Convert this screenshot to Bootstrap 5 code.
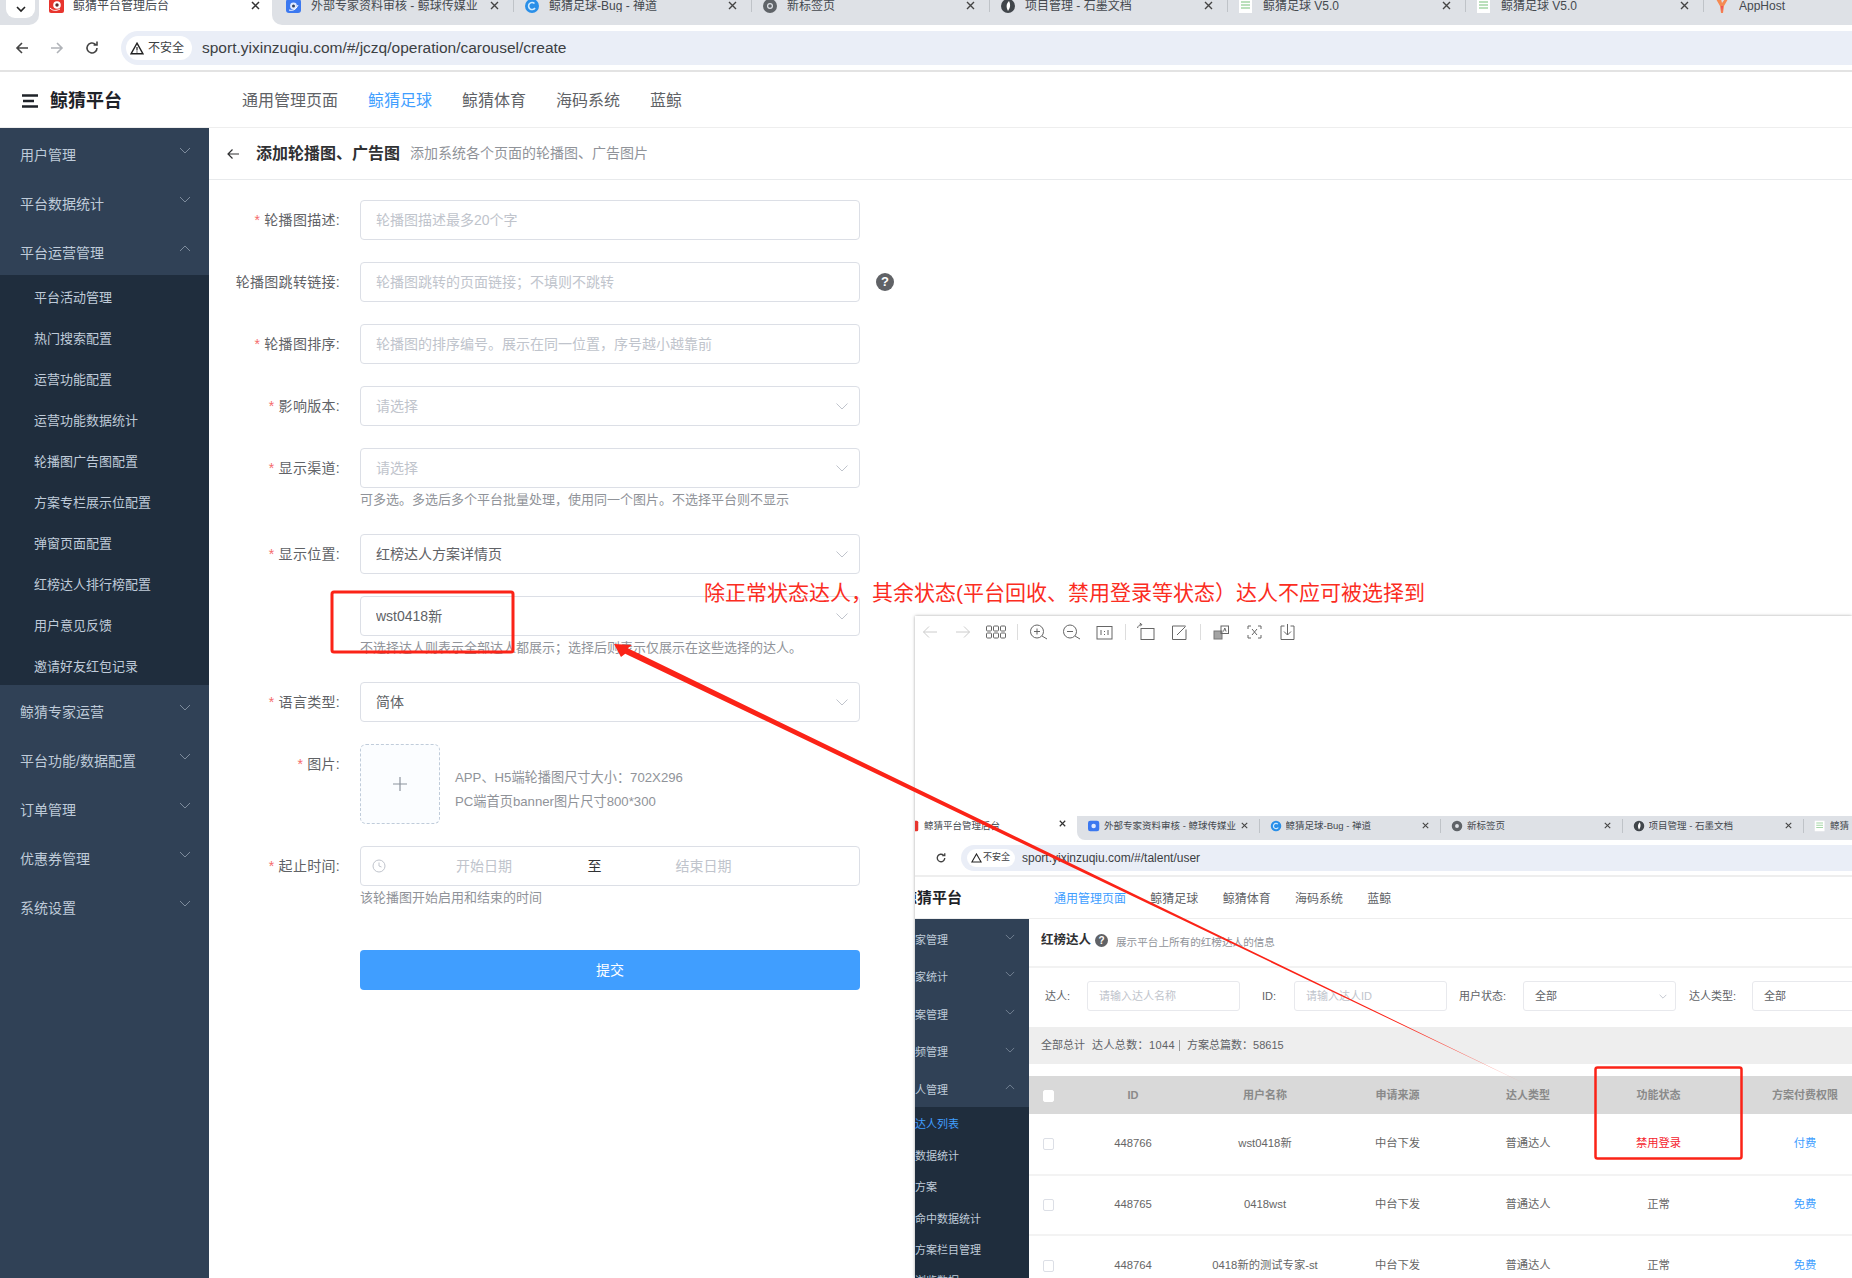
<!DOCTYPE html>
<html lang="zh-CN">
<head>
<meta charset="UTF-8">
<meta name="viewport" content="width=device-width, initial-scale=1.0">
<title>鲸猜平台管理后台</title>
<link href="https://cdn.jsdelivr.net/npm/bootstrap@5.3.2/dist/css/bootstrap.min.css" rel="stylesheet">
<style>
  /* page frame */
  html, body { height: 100%; }
  body { position: relative; width: 1852px; height: 1278px; overflow: hidden; background: #fff;
    font-family: "Liberation Sans", "Noto Sans CJK SC", sans-serif; font-size: 14px; color: #606266; }

  /* browser chrome, big and small version */
  .tab-strip { display: flex; height: 25px; background: #fff; }
  .strip-left { width: 39px; background: #dee1e6; border-bottom-right-radius: 10px; padding-left: 6px; flex: none; }
  .strip-pill { width: 29px; height: 18px; background: #fff; border-radius: 0 0 9px 9px; display: flex; align-items: center; justify-content: center; }
  .tab-live { width: 233px; flex: none; display: flex; align-items: flex-start; background: #fff; padding-left: 10px; }
  .strip-rest { flex: 1; display: flex; align-items: flex-start; background: #dee1e6; border-bottom-left-radius: 10px; min-width: 0; overflow: hidden; padding-left: 3px; }
  .tab-item { width: 238px; flex: none; display: flex; align-items: flex-start; padding-left: 10px; border-left: 1px solid #bfc3c8; height: 12px; position: relative; }
  .tab-item.first { border-left-color: transparent; }
  .tab-icon { width: 16px; height: 14px; flex: none; margin-top: -1px; }
  .tab-text { font-size: 12px; line-height: 12px; color: #45494f; margin-left: 9px; width: 172px; white-space: nowrap; overflow: hidden; }
  .tab-x { position: absolute; right: 14px; top: 1px; width: 9px; height: 9px; }
  .tab-live .tab-text { width: auto; margin-left: 8px; }
  .tab-live .tab-x { position: static; margin-left: auto; margin-right: 12px; margin-top: 1px; }

  .addr-row { height: 47px; display: flex; align-items: flex-start; padding-top: 6px; border-bottom: 2px solid #e3e3e3; background: #fff; }
  .addr-btns { width: 121px; flex: none; display: flex; align-items: center; height: 34px; padding-left: 14px; gap: 19px; }
  .addr-pill { flex: 1; height: 34px; background: #eaeef7; border-radius: 17px 0 0 17px; display: flex; align-items: center; padding-left: 5px; }
  .addr-chip { width: 66px; height: 24px; background: #fff; border-radius: 12px; display: flex; align-items: center; padding-left: 4px; gap: 4px; font-size: 12px; color: #3c4043; flex: none; }
  .addr-url { margin-left: 10px; font-size: 15.5px; color: #3c4043; white-space: nowrap; }

  /* app top bar */
  .top-bar { height: 56px; border-bottom: 1px solid #eee; display: flex; align-items: center; padding: 2px 0 0 22px; background: #fff; }
  .brand-name { font-size: 18px; font-weight: 700; color: #1f2329; margin-left: 12px; width: 192px; line-height: 1; }
  .top-bar .nav-link { padding: 0; font-size: 16px; color: #606266; margin-right: 30px; }
  .top-bar .nav-link.active { color: #409eff; }

  /* app body */
  .app-body { display: flex; height: 1150px; }
  .side-menu { width: 209px; flex: none; background: #304156; }
  .side-item { height: 49px; display: flex; align-items: center; justify-content: space-between; padding: 5px 18px 0 20px; color: #bfcbd9; font-size: 14px; }
  .side-item svg { margin-top: -10px; }
  .side-sub { background: #1f2d3d; }
  .side-sub div { height: 41px; display: flex; align-items: center; padding: 4px 0 0 34px; color: #bfcbd9; font-size: 13px; }
  .main-pane { flex: 1; min-width: 0; background: #fff; }
  .page-head { height: 52px; border-bottom: 1px solid #e8eaec; display: flex; align-items: center; padding-left: 17px; }
  .page-title { font-size: 16px; font-weight: 700; color: #303133; margin-left: 16px; }
  .page-sub { font-size: 14px; color: #909399; margin-left: 10px; }

  /* form */
  .form-area { padding-top: 20px; width: 760px; }
  .form-line { display: flex; margin-bottom: 22px; }
  .form-line.extra { margin-bottom: 40px; }
  .line-label { width: 151px; flex: none; text-align: right; padding-right: 20px; line-height: 40px; color: #606266; letter-spacing: .3px; }
  .line-label i { color: #f56c6c; font-style: normal; margin-right: 4px; }
  .line-body { width: 500px; flex: none; }
  .form-control.el-input, .form-select.el-input { height: 40px; border: 1px solid #dcdfe6; border-radius: 4px; font-size: 14px; color: #606266; padding: 0 15px; box-shadow: none; }
  .form-control.el-input::placeholder { color: #c0c4cc; }
  .form-select.el-input { background-image: url("data:image/svg+xml,%3Csvg xmlns='http://www.w3.org/2000/svg' viewBox='0 0 12 7'%3E%3Cpath d='M.5.5 6 6l5.5-5.5' fill='none' stroke='%23c0c4cc'/%3E%3C/svg%3E"); background-size: 12px 7px; background-position: right 11px center; }
  .form-select.el-input.empty { color: #c0c4cc; }
  .line-help { height: 24px; line-height: 24px; font-size: 13px; color: #909399; white-space: nowrap; }
  .help-dot { width: 18px; height: 18px; border-radius: 50%; background: #606266; color: #fff; font-size: 13px; font-weight: 700; line-height: 18px; text-align: center; margin: 11px 0 0 16px; flex: none; }
  .upload-box { width: 80px; height: 80px; flex: none; border: 1px dashed #c0ccda; border-radius: 6px; background: #fbfdff; display: flex; align-items: center; justify-content: center; }
  .upload-tip { margin-left: 15px; padding-top: 22px; color: #909399; font-size: 13.2px; line-height: 24px; white-space: nowrap; }
  .date-box { display: flex; align-items: center; padding: 0 0 0 11px !important; }
  .date-box .ph { color: #c0c4cc; }
  .date-box .ph.start { margin-left: 12px; text-align: left; padding-left: 58px; width: 188.5px; }
  .date-box .mid { color: #303133; width: 18px; text-align: center; margin-left: -1px; }
  .date-box .ph.end { width: 210px; text-align: left; padding-left: 72px; }
  .submit-btn { width: 500px; height: 40px; background: #409eff; border: 0; border-radius: 4px; color: #fff; font-size: 14px; }

  /* pasted screenshot window */
  .shot-win { position: absolute; left: 915px; top: 616px; width: 937px; height: 662px; background: #fff; box-shadow: 0 0 3px rgba(0,0,0,.35); overflow: hidden; }
  .shot-tools { height: 200px; display: flex; align-items: flex-start; padding: 6px 0 0 5px; }
  .shot-tools svg { width: 20px; height: 20px; margin-right: 13px; flex: none; }
  .shot-tools svg g { fill: none; stroke: #666; stroke-width: 1; }
  .shot-tools svg g.off { stroke: #ccc; }
  .tool-sep { width: 1px; height: 16px; background: #ddd; margin: 2px 10px 0 -2px; flex: none; }

  .mini-strip { display: flex; height: 24px; background: #fff; }
  .mini-live { width: 162px; flex: none; display: flex; align-items: center; padding-bottom: 4px; overflow: hidden; position: relative; }
  .mini-rest { flex: 1; display: flex; background: #dee1e6; border-radius: 0 0 0 8px; align-items: center; padding-bottom: 4px; overflow: hidden; }
  .mini-tab { width: 181.5px; flex: none; display: flex; align-items: center; padding-left: 10px; border-left: 1px solid #bfc3c8; height: 14px; position: relative; }
  .mini-tab.first { border-left-color: transparent; }
  .mini-tab svg.tab-icon, .mini-live svg.tab-icon { width: 12px; height: 12px; margin: 0; }
  .mini-text { font-size: 9.5px; color: #45494f; margin-left: 4px; white-space: nowrap; overflow: hidden; width: 136px; }
  .mini-tab .tab-x, .mini-live .tab-x { width: 7px; height: 7px; top: 3px; right: 11px; }
  .mini-live .tab-x { top: 4px; }
  .mini-addr { height: 37px; padding-top: 5px; border-bottom: 2px solid #eee; display: flex; align-items: flex-start; }
  .mini-btns { width: 46px; flex: none; height: 26px; display: flex; align-items: center; justify-content: flex-end; padding-right: 14px; }
  .mini-pill { flex: 1; height: 26px; background: #eaeef7; border-radius: 13px 0 0 13px; display: flex; align-items: center; padding-left: 6px; }
  .mini-chip { width: 48px; height: 18px; background: #fff; border-radius: 9px; display: flex; align-items: center; padding-left: 4px; gap: 1px; font-size: 9px; color: #3c4043; flex: none; }
  .mini-url { margin-left: 7px; font-size: 12px; color: #3c4043; }
  .mini-top { height: 42px; border-bottom: 1px solid #eee; display: flex; align-items: center; padding-top: 2px; }
  .mini-brand { font-size: 15px; font-weight: 700; color: #1f2329; width: 152px; margin-left: -13px; white-space: nowrap; }
  .mini-top a { font-size: 12px; color: #606266; margin-right: 24.3px; text-decoration: none; }
  .mini-top a.on { color: #409eff; }
  .mini-body { display: flex; height: 360px; }
  .mini-side { width: 114px; flex: none; background: #304156; }
  .mini-item { height: 37.6px; display: flex; align-items: center; justify-content: space-between; padding: 4px 14px 0 0; color: #bfcbd9; font-size: 11px; }
  .mini-item svg { margin-top: -6px; }
  .mini-sub { background: #1f2d3d; height: 180px; }
  .mini-sub div { height: 31.4px; display: flex; align-items: center; padding-top: 4px; color: #bfcbd9; font-size: 11px; white-space: nowrap; }
  .mini-sub div.on { color: #409eff; }
  .mini-main { flex: 1; min-width: 0; overflow: hidden; }
  .mini-head { height: 49px; border-bottom: 2px solid #f2f2f2; display: flex; align-items: center; padding: 0 0 4px 12px; }
  .mini-title { font-size: 12.5px; font-weight: 700; color: #303133; }
  .mini-dot { width: 13px; height: 13px; border-radius: 50%; background: #606266; color: #fff; font-size: 10px; font-weight: 700; line-height: 13px; text-align: center; margin: 0 8px 0 4px; }
  .mini-desc { font-size: 10.6px; color: #909399; padding-top: 5px; }
  .mini-filter { display: flex; align-items: center; padding: 13px 0 0 16px; height: 43px; white-space: nowrap; font-size: 11px; color: #606266; }
  .flt-box { width: 153px; height: 30px; border: 1px solid #e8e9ed; border-radius: 3px; line-height: 28px; padding-left: 11px; flex: none; display: flex; justify-content: space-between; align-items: center; padding-right: 8px; }
  .flt-box.ph { color: #c0c4cc; }
  .flt-l1 { width: 42px; flex: none; }
  .flt-l2 { width: 32px; flex: none; margin-left: 22px; }
  .flt-l3 { width: 64px; flex: none; margin-left: 12px; }
  .flt-l4 { width: 63px; flex: none; margin-left: 13px; }
  .mini-total { height: 37px; margin-top: 16px; background: #eee; display: flex; align-items: center; padding-left: 12px; font-size: 11px; color: #606266; white-space: nowrap; }
  .mini-total span { margin-right: 7px; }
  .mini-total span.div-r { border-right: 1px solid #999; line-height: 11px; padding-right: 4px; letter-spacing: .4px; }
  .talent-table { table-layout: fixed; width: 857px; margin: 12px 0 0; border-collapse: collapse; }
  .talent-table th { height: 38px; background: #d9d9d9; color: #8a8a8a; font-size: 11px; font-weight: 700; text-align: center; vertical-align: middle; padding: 0; border: 0; }
  .talent-table td { height: 60.5px; font-size: 11.3px; color: #666; text-align: center; vertical-align: middle; padding: 0; border: 0; border-bottom: 2px solid #f3f3f3; }
  .tick-box { display: inline-block; width: 11px; height: 12px; border: 1px solid #dcdfe6; border-radius: 2px; background: #fff; vertical-align: middle; }
  th .tick-box { border-color: #fff; }
  .txt-red { color: #f5222d !important; }
  .txt-blue { color: #409eff !important; }

  /* red marks on top of the picture */
  .mark-layer { position: absolute; left: 0; top: 0; pointer-events: none; }
  .mark-note { position: absolute; left: 704px; top: 578px; font-size: 21px; line-height: 30px; color: #fb2d1f; white-space: nowrap; }
</style>
</head>
<body>

<!-- browser tabs -->
<div class="tab-strip">
  <div class="strip-left"><div class="strip-pill"><svg width="10" height="7" viewBox="0 0 10 7"><path d="M1 1l4 4 4-4" fill="none" stroke="#222" stroke-width="1.6"/></svg></div></div>
  <div class="tab-live">
    <svg class="tab-icon" viewBox="0 0 16 14"><rect width="15" height="14" rx="2" fill="#e8352e"/><circle cx="8" cy="6" r="3.8" fill="#fff"/><circle cx="8" cy="6" r="1.7" fill="#5a2a2a"/><path d="M1 9c3 3 6 3 10 1" fill="none" stroke="#fff"/></svg>
    <span class="tab-text">鲸猜平台管理后台</span>
    <svg class="tab-x" viewBox="0 0 9 9"><path d="M1 1l7 7M8 1l-7 7" stroke="#333" stroke-width="1.5"/></svg>
  </div>
  <div class="strip-rest">
    <div class="tab-item first">
      <svg class="tab-icon" viewBox="0 0 16 14"><rect width="15" height="14" rx="3" fill="#3b78f0"/><circle cx="7.5" cy="7" r="3.4" fill="#dfe9ff"/><circle cx="7.5" cy="7" r="1.5" fill="#33415c"/><path d="M3 11c3 1 7 0 9-5" fill="none" stroke="#fff"/></svg>
      <span class="tab-text">外部专家资料审核 - 鲸球传媒业</span>
      <svg class="tab-x" viewBox="0 0 9 9"><path d="M1 1l7 7M8 1l-7 7" stroke="#444" stroke-width="1.4"/></svg>
    </div>
    <div class="tab-item">
      <svg class="tab-icon" viewBox="0 0 16 14"><circle cx="8" cy="7" r="7" fill="#2a8fe8"/><path d="M10.5 4.5A3.5 3.5 0 1 0 11 9" fill="none" stroke="#cfeaff" stroke-width="1.6"/></svg>
      <span class="tab-text">鲸猜足球-Bug - 禅道</span>
      <svg class="tab-x" viewBox="0 0 9 9"><path d="M1 1l7 7M8 1l-7 7" stroke="#444" stroke-width="1.4"/></svg>
    </div>
    <div class="tab-item">
      <svg class="tab-icon" viewBox="0 0 16 14"><circle cx="8" cy="7" r="7" fill="#5f6368"/><circle cx="8" cy="7" r="3" fill="#dee1e6"/><circle cx="8" cy="7" r="1.8" fill="#5f6368"/></svg>
      <span class="tab-text">新标签页</span>
      <svg class="tab-x" viewBox="0 0 9 9"><path d="M1 1l7 7M8 1l-7 7" stroke="#444" stroke-width="1.4"/></svg>
    </div>
    <div class="tab-item">
      <svg class="tab-icon" viewBox="0 0 16 14"><circle cx="8" cy="7" r="7" fill="#41464b"/><path d="M9 2c-3 3-3 6-1 10 2-3 3-6 1-10z" fill="#fff"/></svg>
      <span class="tab-text">项目管理 - 石墨文档</span>
      <svg class="tab-x" viewBox="0 0 9 9"><path d="M1 1l7 7M8 1l-7 7" stroke="#444" stroke-width="1.4"/></svg>
    </div>
    <div class="tab-item">
      <svg class="tab-icon" viewBox="0 0 16 14"><rect x="1" width="13" height="14" fill="#fff"/><path d="M3 3h9M3 6h9M3 9h9" stroke="#a5d6a7" stroke-width="1.6"/></svg>
      <span class="tab-text">鲸猜足球 V5.0</span>
      <svg class="tab-x" viewBox="0 0 9 9"><path d="M1 1l7 7M8 1l-7 7" stroke="#444" stroke-width="1.4"/></svg>
    </div>
    <div class="tab-item">
      <svg class="tab-icon" viewBox="0 0 16 14"><rect x="1" width="13" height="14" fill="#fff"/><path d="M3 3h9M3 6h9M3 9h9" stroke="#a5d6a7" stroke-width="1.6"/></svg>
      <span class="tab-text">鲸猜足球 V5.0</span>
      <svg class="tab-x" viewBox="0 0 9 9"><path d="M1 1l7 7M8 1l-7 7" stroke="#444" stroke-width="1.4"/></svg>
    </div>
    <div class="tab-item">
      <svg class="tab-icon" viewBox="0 0 16 14"><path d="M2 0h5l1 4 3-4h3L10 7l-1 7H7L6 7z" fill="#f58a52"/><path d="M7 7h2l-1 7z" fill="#ef4b5b"/></svg>
      <span class="tab-text">AppHost</span>
    </div>
  </div>
</div>

<!-- address bar -->
<div class="addr-row">
  <div class="addr-btns">
    <svg width="16" height="16" viewBox="0 0 16 16"><path d="M14 8H3M8 3L3 8l5 5" fill="none" stroke="#444" stroke-width="1.6"/></svg>
    <svg width="16" height="16" viewBox="0 0 16 16"><path d="M2 8h11M8 3l5 5-5 5" fill="none" stroke="#b0b3b8" stroke-width="1.6"/></svg>
    <svg width="16" height="16" viewBox="0 0 16 16"><path d="M13 8a5 5 0 1 1-1.6-3.7M13 1.5v3.4H9.6" fill="none" stroke="#444" stroke-width="1.6"/></svg>
  </div>
  <div class="addr-pill">
    <div class="addr-chip">
      <svg width="14" height="13" viewBox="0 0 14 13"><path d="M7 1.2l6 10.6H1z" fill="none" stroke="#222" stroke-width="1.4"/><path d="M7 5v3.6M7 9.6v1" stroke="#222" stroke-width="1.2"/></svg>
      <span>不安全</span>
    </div>
    <span class="addr-url">sport.yixinzuqiu.com/#/jczq/operation/carousel/create</span>
  </div>
</div>

<!-- app header -->
<div class="top-bar">
  <svg width="16" height="14" viewBox="0 0 16 14"><path d="M0 1.5h16M1 7h11M0 12.5h16" stroke="#1f2329" stroke-width="2.4"/></svg>
  <span class="brand-name">鲸猜平台</span>
  <nav class="nav">
    <a class="nav-link" href="#">通用管理页面</a>
    <a class="nav-link active" href="#">鲸猜足球</a>
    <a class="nav-link" href="#">鲸猜体育</a>
    <a class="nav-link" href="#">海码系统</a>
    <a class="nav-link" href="#">蓝鲸</a>
  </nav>
</div>

<div class="app-body">
  <aside class="side-menu">
    <div class="side-item"><span>用户管理</span><svg width="12" height="7" viewBox="0 0 12 7"><path d="M1 1l5 5 5-5" fill="none" stroke="#7d8b9c"/></svg></div>
    <div class="side-item"><span>平台数据统计</span><svg width="12" height="7" viewBox="0 0 12 7"><path d="M1 1l5 5 5-5" fill="none" stroke="#7d8b9c"/></svg></div>
    <div class="side-item"><span>平台运营管理</span><svg width="12" height="7" viewBox="0 0 12 7"><path d="M1 6l5-5 5 5" fill="none" stroke="#7d8b9c"/></svg></div>
    <div class="side-sub">
      <div>平台活动管理</div>
      <div>热门搜索配置</div>
      <div>运营功能配置</div>
      <div>运营功能数据统计</div>
      <div>轮播图广告图配置</div>
      <div>方案专栏展示位配置</div>
      <div>弹窗页面配置</div>
      <div>红榜达人排行榜配置</div>
      <div>用户意见反馈</div>
      <div>邀请好友红包记录</div>
    </div>
    <div class="side-item"><span>鲸猜专家运营</span><svg width="12" height="7" viewBox="0 0 12 7"><path d="M1 1l5 5 5-5" fill="none" stroke="#7d8b9c"/></svg></div>
    <div class="side-item"><span>平台功能/数据配置</span><svg width="12" height="7" viewBox="0 0 12 7"><path d="M1 1l5 5 5-5" fill="none" stroke="#7d8b9c"/></svg></div>
    <div class="side-item"><span>订单管理</span><svg width="12" height="7" viewBox="0 0 12 7"><path d="M1 1l5 5 5-5" fill="none" stroke="#7d8b9c"/></svg></div>
    <div class="side-item"><span>优惠券管理</span><svg width="12" height="7" viewBox="0 0 12 7"><path d="M1 1l5 5 5-5" fill="none" stroke="#7d8b9c"/></svg></div>
    <div class="side-item"><span>系统设置</span><svg width="12" height="7" viewBox="0 0 12 7"><path d="M1 1l5 5 5-5" fill="none" stroke="#7d8b9c"/></svg></div>
  </aside>

  <main class="main-pane">
    <div class="page-head">
      <svg width="14" height="12" viewBox="0 0 14 12"><path d="M13 6H2M6.5 1.5L2 6l4.5 4.5" fill="none" stroke="#303133" stroke-width="1.2"/></svg>
      <span class="page-title">添加轮播图、广告图</span>
      <span class="page-sub">添加系统各个页面的轮播图、广告图片</span>
    </div>

    <form class="form-area">
      <div class="form-line">
        <label class="line-label"><i>*</i>轮播图描述:</label>
        <div class="line-body"><input class="form-control el-input" placeholder="轮播图描述最多20个字"></div>
      </div>
      <div class="form-line">
        <label class="line-label">轮播图跳转链接:</label>
        <div class="line-body"><input class="form-control el-input" placeholder="轮播图跳转的页面链接；不填则不跳转"></div>
        <div class="help-dot">?</div>
      </div>
      <div class="form-line">
        <label class="line-label"><i>*</i>轮播图排序:</label>
        <div class="line-body"><input class="form-control el-input" placeholder="轮播图的排序编号。展示在同一位置，序号越小越靠前"></div>
      </div>
      <div class="form-line">
        <label class="line-label"><i>*</i>影响版本:</label>
        <div class="line-body"><select class="form-select el-input empty"><option>请选择</option></select></div>
      </div>
      <div class="form-line">
        <label class="line-label"><i>*</i>显示渠道:</label>
        <div class="line-body">
          <select class="form-select el-input empty"><option>请选择</option></select>
          <div class="line-help">可多选。多选后多个平台批量处理，使用同一个图片。不选择平台则不显示</div>
        </div>
      </div>
      <div class="form-line">
        <label class="line-label"><i>*</i>显示位置:</label>
        <div class="line-body"><select class="form-select el-input"><option>红榜达人方案详情页</option></select></div>
      </div>
      <div class="form-line">
        <label class="line-label"></label>
        <div class="line-body">
          <select class="form-select el-input"><option>wst0418新</option></select>
          <div class="line-help">不选择达人则表示全部达人都展示；选择后则表示仅展示在这些选择的达人。</div>
        </div>
      </div>
      <div class="form-line">
        <label class="line-label"><i>*</i>语言类型:</label>
        <div class="line-body"><select class="form-select el-input"><option>简体</option></select></div>
      </div>
      <div class="form-line">
        <label class="line-label"><i>*</i>图片:</label>
        <div class="line-body d-flex">
          <div class="upload-box"><svg width="14" height="14" viewBox="0 0 14 14"><path d="M7 0v14M0 7h14" stroke="#8c939d" stroke-width="1.2"/></svg></div>
          <div class="upload-tip">APP、H5端轮播图尺寸大小：702X296<br>PC端首页banner图片尺寸800*300</div>
        </div>
      </div>
      <div class="form-line extra">
        <label class="line-label"><i>*</i>起止时间:</label>
        <div class="line-body">
          <div class="form-control el-input date-box">
            <svg width="14" height="14" viewBox="0 0 14 14"><circle cx="7" cy="7" r="6" fill="none" stroke="#c0c4cc"/><path d="M7 3.5V7l2.5 1" fill="none" stroke="#c0c4cc"/></svg>
            <span class="ph start">开始日期</span>
            <span class="mid">至</span>
            <span class="ph end">结束日期</span>
          </div>
          <div class="line-help">该轮播图开始启用和结束的时间</div>
        </div>
      </div>
      <div class="form-line">
        <label class="line-label"></label>
        <button type="button" class="btn submit-btn">提交</button>
      </div>
    </form>
  </main>
</div>

<!-- pasted screenshot with its image viewer toolbar -->
<div class="shot-win">
  <div class="shot-tools">
    <svg viewBox="0 0 20 20"><g class="off"><path d="M17 10H3.5M9 4.5 3.5 10 9 15.5"/></g></svg>
    <svg viewBox="0 0 20 20"><g class="off"><path d="M3 10h13.5M11 4.5l5.5 5.5-5.500 5.500"/></g></svg>
    <svg viewBox="0 0 20 20"><g><rect x=".5" y="4" width="5" height="5" rx="1"/><rect x="7.5" y="4" width="5" height="5" rx="1"/><rect x="14.5" y="4" width="5" height="5" rx="1"/><rect x=".5" y="11" width="5" height="5" rx="1"/><rect x="7.5" y="11" width="5" height="5" rx="1"/><rect x="14.5" y="11" width="5" height="5" rx="1"/></g></svg>
    <span class="tool-sep"></span>
    <svg viewBox="0 0 20 20"><g><circle cx="9" cy="9.5" r="6.5"/><path d="M14 14l5 3M9 6.5v6M6 9.5h6"/></g></svg>
    <svg viewBox="0 0 20 20"><g><circle cx="9" cy="9.5" r="6.5"/><path d="M14 14l5 3M6 9.5h6"/></g></svg>
    <svg viewBox="0 0 20 20"><g><rect x="3" y="4.5" width="15" height="12.5"/><path d="M7 8v5M14 8v5M10.5 9v1M10.5 12v1"/></g></svg>
    <span class="tool-sep"></span>
    <svg viewBox="0 0 20 20"><g><rect x="5" y="6.5" width="13" height="11"/><path d="M1.5 6c.5-2 2-3.500 4-3.500M3.800 1l2 1.500-1.500 1.800"/></g></svg>
    <svg viewBox="0 0 20 20"><g><path d="M16.500 4H3.500v13.500h13.500v-10"/><path d="M8 13l8.500-8.500"/></g></svg>
    <span class="tool-sep"></span>
    <svg viewBox="0 0 20 20"><rect x="3" y="9" width="8" height="8" fill="#a3a3a3" stroke="#777"/><g><rect x="10" y="4" width="7.5" height="7.5"/><path d="M12.500 9.500l1.300-3.500 1.300 3.500"/></g></svg>
    <svg viewBox="0 0 20 20"><g><path d="M4 7V4h3M14 4h3v3M17 13v3h-3M7 16H4v-3M8 7l5 6M13 7l-5 6"/></g></svg>
    <svg viewBox="0 0 20 20"><g><path d="M7.500 4H4v13.500h13V4h-3.500M10.500 2v11M7 9.500l3.500 3.500L14 9.500"/></g></svg>
  </div>

  <div class="mini-strip">
    <div class="mini-live">
      <svg class="tab-icon" viewBox="0 0 16 14" style="margin-left:-8px"><rect width="15" height="14" rx="2" fill="#e8352e"/></svg>
      <span class="mini-text" style="margin-left:5px">鲸猜平台管理后台</span>
      <svg class="tab-x" style="position:absolute" viewBox="0 0 9 9"><path d="M1 1l7 7M8 1l-7 7" stroke="#333" stroke-width="1.5"/></svg>
    </div>
    <div class="mini-rest">
      <div class="mini-tab first">
        <svg class="tab-icon" viewBox="0 0 16 14"><rect width="15" height="14" rx="3" fill="#3b78f0"/><circle cx="7.5" cy="7" r="3" fill="#dfe9ff"/></svg>
        <span class="mini-text">外部专家资料审核 - 鲸球传媒业</span>
        <svg class="tab-x" viewBox="0 0 9 9"><path d="M1 1l7 7M8 1l-7 7" stroke="#444" stroke-width="1.4"/></svg>
      </div>
      <div class="mini-tab">
        <svg class="tab-icon" viewBox="0 0 16 14"><circle cx="8" cy="7" r="7" fill="#2a8fe8"/><path d="M10.5 4.5A3.5 3.5 0 1 0 11 9" fill="none" stroke="#cfeaff" stroke-width="1.6"/></svg>
        <span class="mini-text">鲸猜足球-Bug - 禅道</span>
        <svg class="tab-x" viewBox="0 0 9 9"><path d="M1 1l7 7M8 1l-7 7" stroke="#444" stroke-width="1.4"/></svg>
      </div>
      <div class="mini-tab">
        <svg class="tab-icon" viewBox="0 0 16 14"><circle cx="8" cy="7" r="7" fill="#5f6368"/><circle cx="8" cy="7" r="2.6" fill="#dee1e6"/></svg>
        <span class="mini-text">新标签页</span>
        <svg class="tab-x" viewBox="0 0 9 9"><path d="M1 1l7 7M8 1l-7 7" stroke="#444" stroke-width="1.4"/></svg>
      </div>
      <div class="mini-tab">
        <svg class="tab-icon" viewBox="0 0 16 14"><circle cx="8" cy="7" r="7" fill="#41464b"/><path d="M9 2c-3 3-3 6-1 10 2-3 3-6 1-10z" fill="#fff"/></svg>
        <span class="mini-text">项目管理 - 石墨文档</span>
        <svg class="tab-x" viewBox="0 0 9 9"><path d="M1 1l7 7M8 1l-7 7" stroke="#444" stroke-width="1.4"/></svg>
      </div>
      <div class="mini-tab">
        <svg class="tab-icon" viewBox="0 0 16 14"><rect x="1" width="13" height="14" fill="#fff"/><path d="M3 3h9M3 6h9M3 9h9" stroke="#a5d6a7" stroke-width="1.6"/></svg>
        <span class="mini-text">鲸猜</span>
      </div>
    </div>
  </div>

  <div class="mini-addr">
    <div class="mini-btns"><svg width="12" height="12" viewBox="0 0 16 16"><path d="M13 8a5 5 0 1 1-1.6-3.7M13 1.5v3.4H9.6" fill="none" stroke="#444" stroke-width="1.8"/></svg></div>
    <div class="mini-pill">
      <div class="mini-chip">
        <svg width="11" height="10" viewBox="0 0 14 13"><path d="M7 1.2l6 10.6H1z" fill="none" stroke="#222" stroke-width="1.4"/></svg>
        <span>不安全</span>
      </div>
      <span class="mini-url">sport.yixinzuqiu.com/#/talent/user</span>
    </div>
  </div>

  <div class="mini-top">
    <span class="mini-brand">鲸猜平台</span>
    <a class="on" href="#">通用管理页面</a>
    <a href="#">鲸猜足球</a>
    <a href="#">鲸猜体育</a>
    <a href="#">海码系统</a>
    <a href="#">蓝鲸</a>
  </div>

  <div class="mini-body">
    <div class="mini-side">
      <div class="mini-item"><span>家管理</span><svg width="10" height="6" viewBox="0 0 12 7"><path d="M1 1l5 5 5-5" fill="none" stroke="#7d8b9c"/></svg></div>
      <div class="mini-item"><span>家统计</span><svg width="10" height="6" viewBox="0 0 12 7"><path d="M1 1l5 5 5-5" fill="none" stroke="#7d8b9c"/></svg></div>
      <div class="mini-item"><span>案管理</span><svg width="10" height="6" viewBox="0 0 12 7"><path d="M1 1l5 5 5-5" fill="none" stroke="#7d8b9c"/></svg></div>
      <div class="mini-item"><span>频管理</span><svg width="10" height="6" viewBox="0 0 12 7"><path d="M1 1l5 5 5-5" fill="none" stroke="#7d8b9c"/></svg></div>
      <div class="mini-item"><span>人管理</span><svg width="10" height="6" viewBox="0 0 12 7"><path d="M1 6l5-5 5 5" fill="none" stroke="#7d8b9c"/></svg></div>
      <div class="mini-sub">
        <div class="on">达人列表</div>
        <div>数据统计</div>
        <div>方案</div>
        <div>命中数据统计</div>
        <div>方案栏目管理</div>
        <div>浏览数据</div>
      </div>
    </div>
    <div class="mini-main">
      <div class="mini-head">
        <span class="mini-title">红榜达人</span>
        <span class="mini-dot">?</span>
        <span class="mini-desc">展示平台上所有的红榜达人的信息</span>
      </div>
      <div class="mini-filter">
        <span class="flt-l1">达人:</span>
        <span class="flt-box ph">请输入达人名称</span>
        <span class="flt-l2">ID:</span>
        <span class="flt-box ph">请输入达人ID</span>
        <span class="flt-l3">用户状态:</span>
        <span class="flt-box">全部<svg width="8" height="5" viewBox="0 0 12 7"><path d="M1 1l5 5 5-5" fill="none" stroke="#c0c4cc" stroke-width="1.4"/></svg></span>
        <span class="flt-l4">达人类型:</span>
        <span class="flt-box">全部</span>
      </div>
      <div class="mini-total">
        <span>全部总计</span>
        <span class="div-r">达人总数：1044</span>
        <span>方案总篇数：58615</span>
      </div>
      <table class="talent-table">
        <colgroup><col style="width:39px"><col style="width:130px"><col style="width:134px"><col style="width:131px"><col style="width:130px"><col style="width:131px"><col style="width:162px"></colgroup>
        <thead>
          <tr><th><span class="tick-box"></span></th><th>ID</th><th>用户名称</th><th>申请来源</th><th>达人类型</th><th>功能状态</th><th>方案付费权限</th></tr>
        </thead>
        <tbody>
          <tr><td><span class="tick-box"></span></td><td>448766</td><td>wst0418新</td><td>中台下发</td><td>普通达人</td><td class="txt-red">禁用登录</td><td class="txt-blue">付费</td></tr>
          <tr><td><span class="tick-box"></span></td><td>448765</td><td>0418wst</td><td>中台下发</td><td>普通达人</td><td>正常</td><td class="txt-blue">免费</td></tr>
          <tr><td><span class="tick-box"></span></td><td>448764</td><td>0418新的测试专家-st</td><td>中台下发</td><td>普通达人</td><td>正常</td><td class="txt-blue">免费</td></tr>
        </tbody>
      </table>
    </div>
  </div>
</div>

<!-- red annotations -->
<svg class="mark-layer" width="1852" height="1278" viewBox="0 0 1852 1278">
  <defs>
    <linearGradient id="arrowFade" gradientUnits="userSpaceOnUse" x1="614" y1="644" x2="1538" y2="1090">
      <stop offset="0" stop-color="#fb2317"/><stop offset=".85" stop-color="#fb2317"/><stop offset="1" stop-color="#f9a8a0"/>
    </linearGradient>
  </defs>
  <rect x="332" y="592" width="181" height="60" rx="2" fill="none" stroke="#fb2317" stroke-width="3"/>
  <rect x="1595.5" y="1067.5" width="146" height="91" rx="2" fill="none" stroke="#fb2317" stroke-width="2.5"/>
  <polygon points="614,644 632,645 627.8,648.3 1538,1090 625.2,653.7 621,657" fill="url(#arrowFade)"/>
</svg>
<div class="mark-note">除正常状态达人，其余状态(平台回收、禁用登录等状态）达人不应可被选择到</div>

<script src="https://cdn.jsdelivr.net/npm/bootstrap@5.3.2/dist/js/bootstrap.bundle.min.js"></script>
</body>
</html>
